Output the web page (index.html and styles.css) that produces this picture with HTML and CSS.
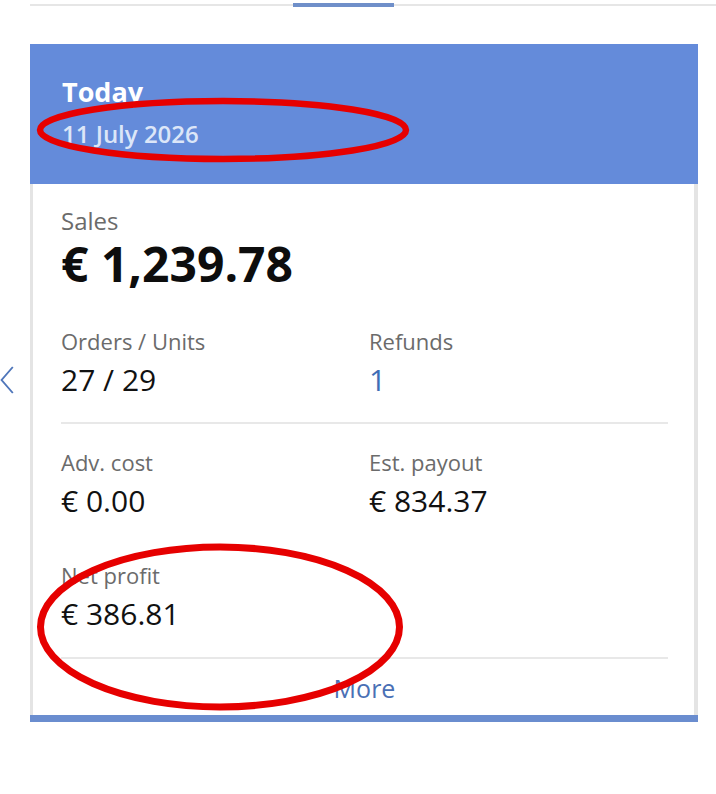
FILE: index.html
```html
<!DOCTYPE html>
<html lang="en">
<head>
<meta charset="utf-8">
<title>Today</title>
<link rel="stylesheet" href="styles.css">
</head>
<body>
<div class="page">
  <div class="tabs">
    <span class="tab-line tab-lead"></span>
    <span class="tab-active"></span>
    <span class="tab-line tab-rest"></span>
  </div>
  <div class="carousel">
    <span class="prev" aria-label="Previous">
      <svg width="14" height="28" viewBox="0 0 14 28"><path d="M12.8 1 L1.6 14 L12.8 27" fill="none" stroke="#4f76ba" stroke-width="1.9"/></svg>
    </span>
    <section class="card">
      <header class="card-head">
        <div class="head-title">Today</div>
        <div class="head-date">11 July 2026</div>
      </header>
      <div class="card-body">
        <div class="sales">
          <div class="sales-label">Sales</div>
          <div class="sales-value">€ 1,239.78</div>
        </div>
        <div class="grid">
          <div class="stat"><div class="label">Orders / Units</div><div class="value">27 / 29</div></div>
          <div class="stat"><div class="label">Refunds</div><div class="value link">1</div></div>
        </div>
        <hr class="divider first">
        <div class="grid">
          <div class="stat"><div class="label">Adv. cost</div><div class="value">€ 0.00</div></div>
          <div class="stat"><div class="label">Est. payout</div><div class="value">€ 834.37</div></div>
          <div class="stat"><div class="label">Net profit</div><div class="value">€ 386.81</div></div>
        </div>
        <hr class="divider last">
        <div class="more">More</div>
      </div>
      <div class="card-foot"></div>
    </section>
  </div>
  <svg class="annot" width="716" height="794" viewBox="0 0 716 794">
    <ellipse cx="223" cy="127" rx="183" ry="29" fill="none" stroke="#e60000" stroke-width="6.5"/>
    <ellipse cx="220" cy="624" rx="179.5" ry="80" fill="none" stroke="#e60000" stroke-width="7"/>
  </svg>
</div>
</body>
</html>
```
FILE: styles.css
```css
html, body {
  margin: 0;
  padding: 0;
  background: #ffffff;
}
body {
  font-family: "Open Sans", "Noto Sans", "DejaVu Sans", sans-serif;
  width: 716px;
  height: 794px;
  overflow: hidden;
}
.page {
  position: relative;
  width: 716px;
  height: 794px;
}
.tabs {
  display: flex;
  align-items: center;
  height: 4px;
  margin: 3px 0 0 30px;
}
.tab-line {
  height: 2px;
  background: #e6e6e6;
}
.tab-lead {
  width: 263px;
}
.tab-rest {
  flex: 1;
}
.tab-active {
  width: 101px;
  height: 4px;
  background: #6f8fc9;
}
.carousel {
  position: relative;
  margin-top: 37px;
}
.prev {
  position: absolute;
  left: 0;
  top: 322px;
  width: 14px;
  height: 28px;
  display: block;
}
.prev svg {
  display: block;
}
.card {
  margin-left: 30px;
  width: 668px;
}
.card-head {
  height: 140px;
  box-sizing: border-box;
  padding: 31px 0 0 32px;
  background: #648bda;
}
.head-title {
  font-size: 27px;
  line-height: 34px;
  font-weight: 700;
  color: #ffffff;
}
.head-date {
  margin-top: 10px;
  font-size: 24px;
  line-height: 30px;
  font-weight: 600;
  color: #dce6f8;
}
.card-body {
  border-left: 3px solid #e4e4e4;
  border-right: 4px solid #e4e4e4;
  padding: 24px 26px 0 28px;
}
.sales {
  margin-bottom: 36px;
}
.sales-label {
  font-size: 24px;
  line-height: 26px;
  color: #6b6b6b;
}
.sales-value {
  margin-top: 4px;
  font-size: 48px;
  line-height: 52px;
  font-weight: 700;
  color: #0d0d0d;
}
.grid {
  display: grid;
  grid-template-columns: 308px 1fr;
  row-gap: 41px;
}
.label {
  font-size: 22px;
  line-height: 30px;
  color: #6b6b6b;
}
.value {
  margin-top: 6px;
  font-size: 30px;
  line-height: 36px;
  color: #111111;
}
.value.link {
  color: #3f6db5;
}
.divider {
  border: 0;
  height: 2px;
  background: #e8e8e8;
  margin: 0;
}
.divider.first {
  margin: 24px 0 23px;
}
.divider.last {
  margin: 25px 0 0;
}
.more {
  padding: 13px 0 11px;
  text-align: center;
  font-size: 25px;
  line-height: 32px;
  color: #4a70b5;
}
.card-foot {
  height: 7px;
  background: #6a8dcf;
}
.annot {
  position: absolute;
  left: 0;
  top: 0;
  pointer-events: none;
}
```
